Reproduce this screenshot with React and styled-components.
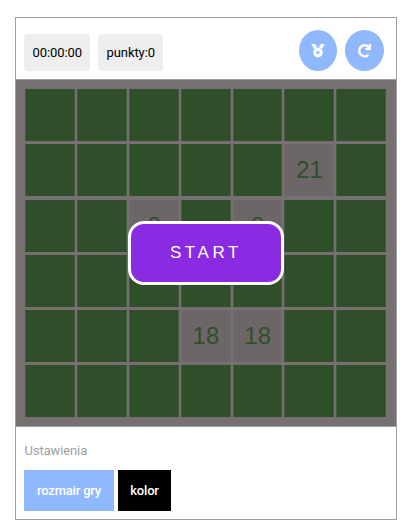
import React from "react";
import styled, { createGlobalStyle } from "styled-components";

const GlobalStyle = createGlobalStyle`
  * { box-sizing: border-box; }
  body { margin: 0; background: #fff; font-family: Roboto, sans-serif; }
`;

const Game = styled.main`
  width: 382px;
  height: 503px;
  margin: 17px 0 0 15px;
  border: 1px solid #a0a0a0;
  display: flex;
  flex-direction: column;
`;

const Header = styled.header`
  height: 62px;
  flex: none;
  padding: 12px 12px 0 8px;
  border-bottom: 1px solid #a0a0a0;
  display: flex;
  align-items: flex-start;
  gap: 8px;
`;

const Stat = styled.div`
  width: ${(p) => p.$width}px;
  height: 37px;
  margin-top: 4px;
  padding-left: 8.6px;
  border-radius: 4px;
  background: #eee;
  color: #000;
  font-size: 13px;
  line-height: 37px;
  letter-spacing: -0.1px;
  white-space: nowrap;
`;

const Actions = styled.div`
  margin-left: auto;
  display: flex;
  gap: 8px;
`;

const RoundButton = styled.button`
  width: ${(p) => p.$width}px;
  height: 41px;
  padding: 0;
  border: 0;
  border-radius: 50%;
  background: #90b8ff;
  color: #fff;
  display: flex;
  align-items: center;
  justify-content: center;
`;

const Board = styled.section`
  position: relative;
  height: 347px;
  flex: none;
  padding: 9.2px 10.1px 9px 9.3px;
  background: #767170;
  border-bottom: 1px solid #a0a0a0;
`;

const Cells = styled.div`
  height: 328px;
  display: grid;
  grid-template-columns: repeat(7, 1fr);
  grid-template-rows: repeat(6, 1fr);
  gap: 3.2px 2px;
`;

const Cell = styled.div`
  display: flex;
  align-items: center;
  justify-content: center;
  padding-left: 0.6px;
  background: ${(p) => (p.$open ? "#6c6766" : "#2f4f2a")};
  border: solid ${(p) => (p.$open ? "#706b6a" : "#455844")};
  border-width: 0 1px;
  color: #2f4f2a;
  font: 24px "Liberation Sans", Arial, sans-serif;
`;

const StartButton = styled.button`
  position: absolute;
  left: 112px;
  top: 141px;
  width: 156px;
  height: 64px;
  padding: 0;
  border: 3px solid #fff;
  border-radius: 16px;
  background: #8a2be2;
  color: #fff;
  font: 17px "Liberation Sans", Arial, sans-serif;
  letter-spacing: 3.6px;
`;

const Settings = styled.footer`
  padding: 15px 8px 0;
`;

const SettingsTitle = styled.div`
  height: 28px;
  padding-left: 0.6px;
  color: #a0a0a0;
  font-size: 13px;
  line-height: 17px;
  letter-spacing: -0.12px;
`;

const SettingsRow = styled.div`
  display: flex;
  gap: 4px;
`;

const SettingButton = styled.button`
  width: ${(p) => p.$width}px;
  height: 41px;
  padding: 0;
  border: 0;
  background: ${(p) => p.$color};
  color: #fff;
  font: 500 13px Roboto, sans-serif;
  letter-spacing: -0.2px;
`;

function MedalIcon() {
  return (
    <svg width="14" height="15" viewBox="0 0 14 15">
      <path fill="currentColor" d="M0.2 1 H4.2 L6.2 4.3 L3 6 Z M13.8 1 H9.8 L7.8 4.3 L11 6 Z" />
      <circle cx="7" cy="9.6" r="4.8" fill="currentColor" />
      <path fill="#90b8ff" d="M7 7 L7.8 8.8 L9.3 9 L8.1 10 L8.4 11.5 L7 10.8 L5.6 11.5 L5.9 10 L4.7 9 L6.2 8.8 Z" />
    </svg>
  );
}

function RestartIcon() {
  return (
    <svg width="15" height="15" viewBox="0 0 15 15" fill="none" stroke="currentColor">
      <path d="M12.4 5 A5.5 5.5 0 1 0 11.5 11.8" strokeWidth="2.4" />
      <path d="M13 1 V6 H8.2" strokeWidth="2" />
    </svg>
  );
}

const values = { 12: 21, 16: 8, 18: 8, 31: 18, 32: 18 };

export default function App() {
  return (
    <>
      <GlobalStyle />
      <Game>
        <Header>
          <Stat $width={66}>00:00:00</Stat>
          <Stat $width={65}>punkty:0</Stat>
          <Actions>
            <RoundButton $width={38} aria-label="Wyniki"><MedalIcon /></RoundButton>
            <RoundButton $width={39} aria-label="Od nowa"><RestartIcon /></RoundButton>
          </Actions>
        </Header>
        <Board>
          <Cells>
            {Array.from({ length: 42 }, (_, i) => (
              <Cell key={i} $open={i in values}>{values[i]}</Cell>
            ))}
          </Cells>
          <StartButton>START</StartButton>
        </Board>
        <Settings>
          <SettingsTitle>Ustawienia</SettingsTitle>
          <SettingsRow>
            <SettingButton $width={90} $color="#90b8ff">rozmair gry</SettingButton>
            <SettingButton $width={53} $color="#000">kolor</SettingButton>
          </SettingsRow>
        </Settings>
      </Game>
    </>
  );
}
